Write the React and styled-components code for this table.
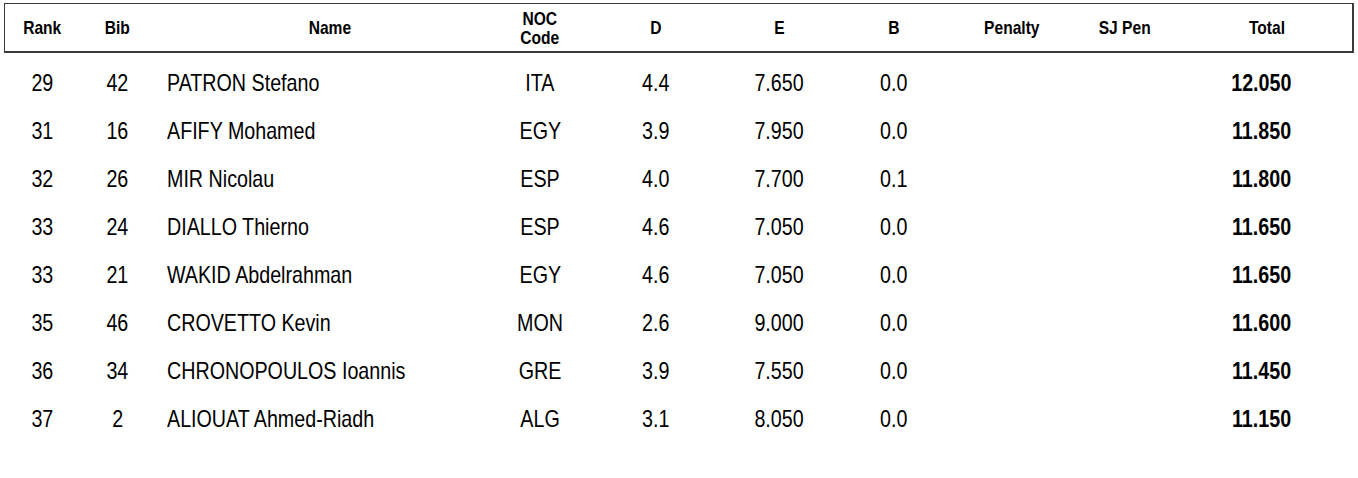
import React from 'react';
import styled, { createGlobalStyle } from 'styled-components';

const GlobalStyle = createGlobalStyle`
  html, body {
    margin: 0;
    padding: 0;
    background: #ffffff;
  }
  body {
    font-family: "Liberation Sans", Arial, sans-serif;
    color: #000;
  }
`;

// column widths, left to right
const COLUMNS = '75px 75px 350px 70px 162px 84px 146px 90px 136px 148px';

// Arial Narrow is not installed, so squeeze Liberation Sans (Arial metrics) instead
const NARROW = 0.82;

const Sheet = styled.div`
  width: 1350px;
  padding: 3px 0 0 4px;
`;

const HeaderBox = styled.div`
  display: grid;
  grid-template-columns: ${COLUMNS};
  height: 47px;
  border: 1px solid #3a3a3a;
  border-width: 1px 2px 2px 1px;
  align-items: center;
`;

const HeadCell = styled.div`
  text-align: center;
  font-weight: 700;
  font-size: 19px;
  line-height: 19px;
`;

const Rows = styled.div`
  padding-top: 6px;
`;

const Row = styled.div`
  display: grid;
  grid-template-columns: ${COLUMNS};
  height: 48px;
  align-items: center;
  font-size: 24px;
  line-height: 28px;
  margin-left: 1px;
`;

const Cell = styled.div`
  text-align: ${({ align }) => align || 'center'};
  padding-left: ${({ padLeft }) => padLeft || 0}px;
  padding-right: ${({ padRight }) => padRight || 0}px;
  font-weight: ${({ bold }) => (bold ? 700 : 400)};
  white-space: nowrap;
`;

const Narrow = styled.span`
  display: inline-block;
  transform: scaleX(${NARROW});
  transform-origin: ${({ origin }) => origin || 'center'};
`;

const RESULTS = [
  { rank: 29, bib: 42, name: 'PATRON Stefano', noc: 'ITA', d: '4.4', e: '7.650', b: '0.0', total: '12.050' },
  { rank: 31, bib: 16, name: 'AFIFY Mohamed', noc: 'EGY', d: '3.9', e: '7.950', b: '0.0', total: '11.850' },
  { rank: 32, bib: 26, name: 'MIR Nicolau', noc: 'ESP', d: '4.0', e: '7.700', b: '0.1', total: '11.800' },
  { rank: 33, bib: 24, name: 'DIALLO Thierno', noc: 'ESP', d: '4.6', e: '7.050', b: '0.0', total: '11.650' },
  { rank: 33, bib: 21, name: 'WAKID Abdelrahman', noc: 'EGY', d: '4.6', e: '7.050', b: '0.0', total: '11.650' },
  { rank: 35, bib: 46, name: 'CROVETTO Kevin', noc: 'MON', d: '2.6', e: '9.000', b: '0.0', total: '11.600' },
  { rank: 36, bib: 34, name: 'CHRONOPOULOS Ioannis', noc: 'GRE', d: '3.9', e: '7.550', b: '0.0', total: '11.450' },
  { rank: 37, bib: 2, name: 'ALIOUAT Ahmed-Riadh', noc: 'ALG', d: '3.1', e: '8.050', b: '0.0', total: '11.150' },
];

const HEADINGS = ['Rank', 'Bib', 'Name', ['NOC', 'Code'], 'D', 'E', 'B', 'Penalty', 'SJ Pen', 'Total'];

const App = () => (
  <>
    <GlobalStyle />
    <Sheet>
      <HeaderBox>
        {HEADINGS.map((h, i) => (
          <HeadCell key={i}>
            <Narrow>{Array.isArray(h) ? <>{h[0]}<br />{h[1]}</> : h}</Narrow>
          </HeadCell>
        ))}
      </HeaderBox>

      <Rows>
        {RESULTS.map((r, i) => (
          <Row key={i}>
            <Cell><Narrow>{r.rank}</Narrow></Cell>
            <Cell><Narrow>{r.bib}</Narrow></Cell>
            <Cell align="left" padLeft={12}><Narrow origin="left">{r.name}</Narrow></Cell>
            <Cell><Narrow>{r.noc}</Narrow></Cell>
            <Cell><Narrow>{r.d}</Narrow></Cell>
            <Cell><Narrow>{r.e}</Narrow></Cell>
            <Cell><Narrow>{r.b}</Narrow></Cell>
            <Cell />
            <Cell />
            <Cell align="right" padRight={50} bold><Narrow origin="right">{r.total}</Narrow></Cell>
          </Row>
        ))}
      </Rows>
    </Sheet>
  </>
);

export default App;
